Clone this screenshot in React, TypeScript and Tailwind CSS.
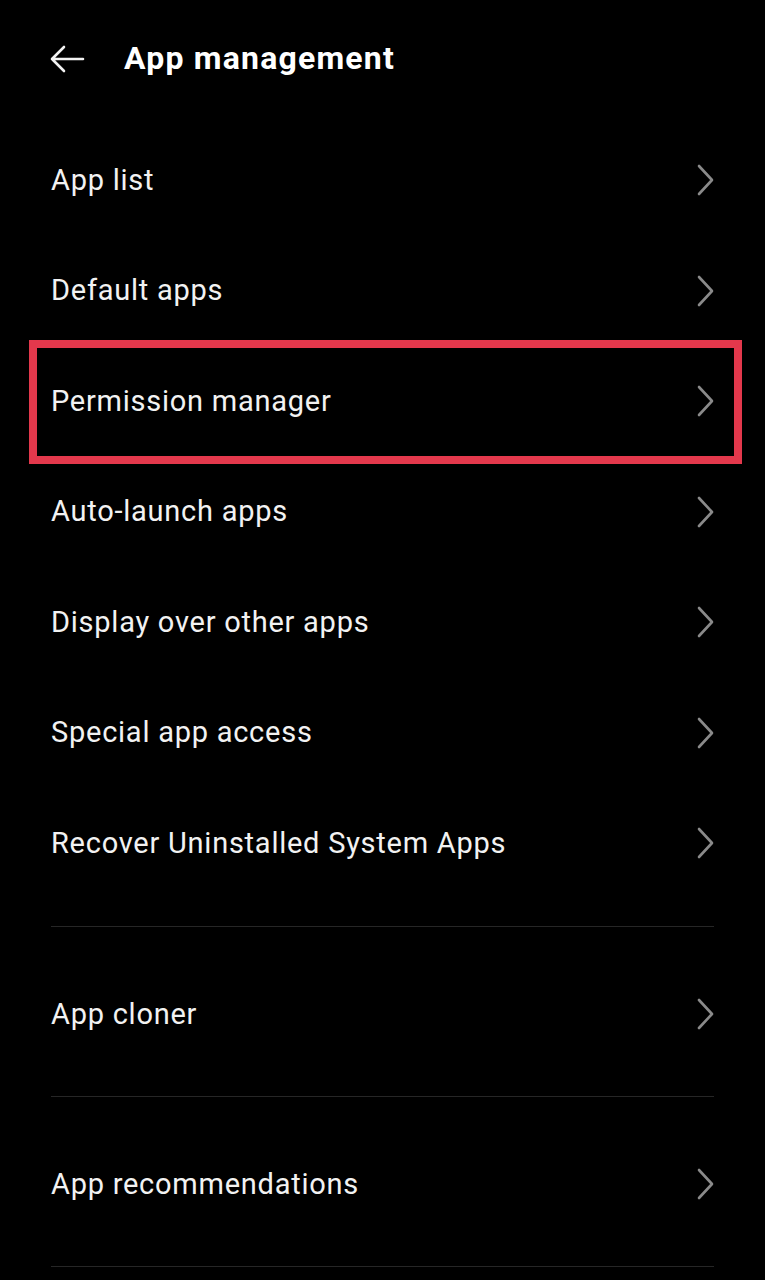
import { ReactNode } from 'react';

function Chevron() {
    return (
        <svg width="18" height="32" viewBox="0 0 18 32" fill="none" className="shrink-0">
            <path d="M3 2 L16 16 L3 30" stroke="#8a8a8a" strokeWidth="2.6" strokeLinecap="round" strokeLinejoin="round" />
        </svg>
    );
}

function Row({ label, tall, children }: { label: string; tall?: boolean; children?: ReactNode }) {
    return (
        <div className={`relative flex items-center justify-between pl-[51px] pr-[51px] ${tall ? 'h-[169px] pt-[6px]' : 'h-[110.5px]'}`}>
            <span className="text-[29px] leading-none tracking-[0.75px] text-[#f2f2f2]">{label}</span>
            <Chevron />
            {children}
        </div>
    );
}

export default function App() {
    const items = [
        'App list',
        'Default apps',
        'Permission manager',
        'Auto-launch apps',
        'Display over other apps',
        'Special app access',
        'Recover Uninstalled System Apps',
    ];

    return (
        <div className="min-h-[1280px] w-[765px] bg-black" style={{ fontFamily: 'Roboto, "Liberation Sans", sans-serif' }}>
            {/* Header */}
            <div className="flex h-[125px] items-start pl-[49px] pt-[41px]">
                <svg width="36" height="34" viewBox="0 0 36 34" fill="none" className="mt-[1px]">
                    <path d="M34 17 H3 M15 5 L3 17 L15 29" stroke="#f2f2f2" strokeWidth="2.6" strokeLinecap="round" strokeLinejoin="round" />
                </svg>
                <h1 className="ml-[39px] text-[32px] leading-[34px] font-bold tracking-[1.2px] text-white">App management</h1>
            </div>

            {/* Main list */}
            {items.map((label) => (
                <Row key={label} label={label}>
                    {label === 'Permission manager' && (
                        <div className="pointer-events-none absolute top-[-6px] bottom-[-7px] left-[29px] right-[23px] border-[8px] border-[#e3384c]" />
                    )}
                </Row>
            ))}

            <div className="h-[27px]" />

            {/* Other sections */}
            <div className="mx-[51px] h-px bg-[#262626]" />
            <Row label="App cloner" tall />
            <div className="mx-[51px] h-px bg-[#262626]" />
            <Row label="App recommendations" tall />
            <div className="mx-[51px] h-px bg-[#262626]" />
        </div>
    );
}
